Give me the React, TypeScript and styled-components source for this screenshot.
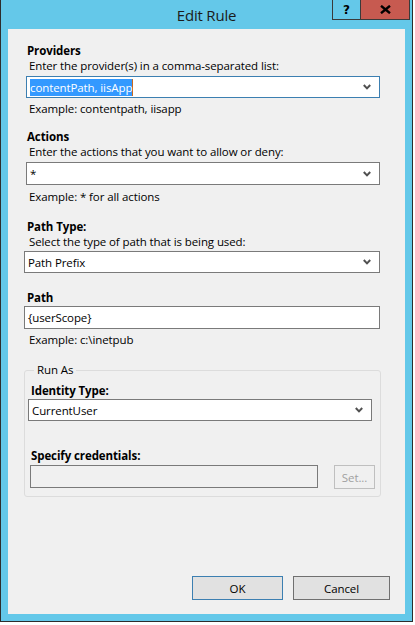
import React from "react";
import styled, { createGlobalStyle } from "styled-components";

const Global = createGlobalStyle`
  html, body { margin: 0; padding: 0; background: #ffffff; }
  body { font-family: "Open Sans", "Noto Sans", sans-serif; font-size: 11.5px; color: #000; }
  * { box-sizing: border-box; }
`;

const Window = styled.div`
  width: 413px;
  height: 622px;
  background: #64c8e9;
  border: 1px solid #2d2d2d;
  border-top: none;
  display: flex;
  flex-direction: column;
`;

const TitleBar = styled.div`
  height: 28px;
  display: grid;
  grid-template-columns: 1fr auto 1fr;
  align-items: start;
`;

const Title = styled.div`
  grid-column: 2;
  font-size: 15px;
  line-height: 20px;
  margin-top: 5px;
  color: #1b1b1b;
  letter-spacing: -0.2px;
`;

const Caption = styled.div`
  grid-column: 3;
  justify-self: end;
  display: flex;
  margin-right: 2px;
  border: 1px solid #3a3a3a;
  border-top: none;
  height: 20px;
`;

const CaptionButton = styled.div<{ $close?: boolean }>`
  width: ${(p) => (p.$close ? 49 : 27)}px;
  height: 19px;
  background: ${(p) => (p.$close ? "#c75a50" : "transparent")};
  border-left: ${(p) => (p.$close ? "1px solid #3a3a3a" : "none")};
  display: flex;
  align-items: center;
  justify-content: center;
  font-family: "DejaVu Sans", sans-serif;
  font-weight: bold;
  font-size: 12px;
  color: #000;
`;

const Client = styled.div`
  margin: 1px 7px 0 7px;
  height: 585px;
  background: #f0f0f0;
  display: flex;
  flex-direction: column;
  padding: 14px 0 14px 0;
`;

const Text = styled.div<{ $bold?: boolean; $x: number; $mt?: number }>`
  font-weight: ${(p) => (p.$bold ? 700 : 400)};
  line-height: 16px;
  height: 16px;
  margin-left: ${(p) => p.$x}px;
  margin-top: ${(p) => p.$mt ?? 0}px;
  white-space: nowrap;
  letter-spacing: -0.1px;
  color: #000;
`;

const Box = styled.div<{ $x: number; $w: number; $h: number; $mt?: number; $focus?: boolean; $disabled?: boolean }>`
  margin-left: ${(p) => p.$x}px;
  margin-top: ${(p) => p.$mt ?? 0}px;
  width: ${(p) => p.$w}px;
  height: ${(p) => p.$h}px;
  flex: none;
  border: 1px solid ${(p) => (p.$focus ? "#3c7fb1" : "#7a7a7a")};
  background: ${(p) => (p.$disabled ? "#f0f0f0" : "#ffffff")};
  display: flex;
  align-items: center;
  padding: 0 8px 0 3px;
  letter-spacing: -0.1px;
  white-space: nowrap;
`;

const Value = styled.span`
  flex: 1;
`;

const Selected = styled.span`
  background: #3399ff;
  color: #fff;
  padding: 1px 0;
  border-right: 1px solid #c86a20;
`;

const Chevron = () => (
  <svg width="8" height="6" viewBox="0 0 8 6">
    <polyline points="0.8,1 4,4.4 7.2,1" fill="none" stroke="#505050" strokeWidth="2" />
  </svg>
);

const Group = styled.fieldset`
  margin: 14px 0 0 16px;
  width: 357px;
  border: 1px solid #dcdcdc;
  border-radius: 3px;
  padding: 5px 0 7px 3px;
  min-width: 0;
`;

const Legend = styled.legend`
  padding: 0 3px;
  margin-left: 6px;
  line-height: 16px;
  letter-spacing: -0.1px;
`;

const Row = styled.div<{ $mt?: number }>`
  display: flex;
  align-items: flex-start;
  margin-top: ${(p) => p.$mt ?? 0}px;
`;

const Button = styled.div<{ $w: number; $default?: boolean; $disabled?: boolean; $ml?: number }>`
  width: ${(p) => p.$w}px;
  height: 24px;
  margin-left: ${(p) => p.$ml ?? 0}px;
  background: ${(p) => (p.$disabled ? "#f0f0f0" : "#e1e1e1")};
  border: 1px solid ${(p) => (p.$default ? "#3c7fb1" : p.$disabled ? "#bfbfbf" : "#707070")};
  color: ${(p) => (p.$disabled ? "#a0a0a0" : "#000")};
  display: flex;
  align-items: center;
  justify-content: center;
  letter-spacing: -0.1px;
`;

const ButtonBar = styled.div`
  margin-top: auto;
  display: flex;
  justify-content: flex-end;
  gap: 10px;
  padding-right: 15px;
`;

export default function App() {
  return (
    <>
      <Global />
      <Window>
        <TitleBar>
          <Title>Edit Rule</Title>
          <Caption>
            <CaptionButton>?</CaptionButton>
            <CaptionButton $close>
              <svg width="11" height="9" viewBox="0 0 11 9">
                <path d="M1 0.8 L10 8.2 M10 0.8 L1 8.2" stroke="#000" strokeWidth="2.4" />
              </svg>
            </CaptionButton>
          </Caption>
        </TitleBar>
        <Client>
          <Text $bold $x={19}>Providers</Text>
          <Text $x={21} $mt={-1}>Enter the provider(s) in a comma-separated list:</Text>
          <Box $x={18} $w={354} $h={22} $mt={2} $focus>
            <Value><Selected>contentPath, iisApp</Selected></Value>
            <Chevron />
          </Box>
          <Text $x={21} $mt={3}>Example: contentpath, iisapp</Text>

          <Text $bold $x={19} $mt={12}>Actions</Text>
          <Text $x={21} $mt={-1}>Enter the actions that you want to allow or deny:</Text>
          <Box $x={18} $w={354} $h={23} $mt={2}>
            <Value>*</Value>
            <Chevron />
          </Box>
          <Text $x={21} $mt={4}>Example: * for all actions</Text>

          <Text $bold $x={19} $mt={14}>Path Type:</Text>
          <Text $x={21} $mt={-1}>Select the type of path that is being used:</Text>
          <Box $x={16} $w={356} $h={22} $mt={1}>
            <Value>Path Prefix</Value>
            <Chevron />
          </Box>

          <Text $bold $x={19} $mt={17}>Path</Text>
          <Box $x={16} $w={356} $h={23} $mt={0}>
            <Value>{"{userScope}"}</Value>
          </Box>
          <Text $x={21} $mt={3}>Example: c:\inetpub</Text>

          <Group>
            <Legend>Run As</Legend>
            <Text $bold $x={3}>Identity Type:</Text>
            <Box $x={0} $w={344} $h={22} $mt={0}>
              <Value>CurrentUser</Value>
              <Chevron />
            </Box>
            <Text $bold $x={3} $mt={27}>Specify credentials:</Text>
            <Row $mt={1}>
              <Box $x={2} $w={288} $h={23} $disabled />
              <Button $w={41} $ml={16} $disabled>Set...</Button>
            </Row>
          </Group>

          <ButtonBar>
            <Button $w={91} $default>OK</Button>
            <Button $w={97}>Cancel</Button>
          </ButtonBar>
        </Client>
      </Window>
    </>
  );
}
